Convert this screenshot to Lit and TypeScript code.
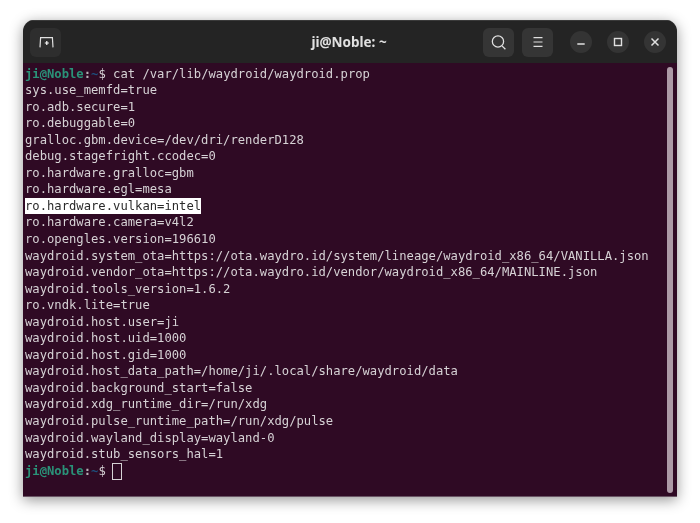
import { LitElement, html, css, svg } from "lit";
import { customElement } from "lit/decorators.js";

const LINES = [
  "sys.use_memfd=true",
  "ro.adb.secure=1",
  "ro.debuggable=0",
  "gralloc.gbm.device=/dev/dri/renderD128",
  "debug.stagefright.ccodec=0",
  "ro.hardware.gralloc=gbm",
  "ro.hardware.egl=mesa",
  "@ro.hardware.vulkan=intel",
  "ro.hardware.camera=v4l2",
  "ro.opengles.version=196610",
  "waydroid.system_ota=https://ota.waydro.id/system/lineage/waydroid_x86_64/VANILLA.json",
  "waydroid.vendor_ota=https://ota.waydro.id/vendor/waydroid_x86_64/MAINLINE.json",
  "waydroid.tools_version=1.6.2",
  "ro.vndk.lite=true",
  "waydroid.host.user=ji",
  "waydroid.host.uid=1000",
  "waydroid.host.gid=1000",
  "waydroid.host_data_path=/home/ji/.local/share/waydroid/data",
  "waydroid.background_start=false",
  "waydroid.xdg_runtime_dir=/run/xdg",
  "waydroid.pulse_runtime_path=/run/xdg/pulse",
  "waydroid.wayland_display=wayland-0",
  "waydroid.stub_sensors_hal=1",
];

const icon = (content: unknown, size = 16) => html`<svg
  width=${size}
  height=${size}
  viewBox="0 0 16 16"
  fill="none"
  stroke="#e0e0e0"
  stroke-width="1.2"
>${content}</svg>`;

@customElement("app-root")
export class AppRoot extends LitElement {
  static styles = css`
    :host {
      display: block;
      width: 700px;
      height: 523px;
      background: #fff;
      box-sizing: border-box;
      padding: 20px 23px 26px;
      overflow: hidden;
    }
    .window {
      height: 100%;
      display: flex;
      flex-direction: column;
      border-radius: 11px 11px 0 0;
      overflow: hidden;
      box-shadow: 0 3px 14px rgba(0, 0, 0, 0.42);
    }
    .header {
      flex: 0 0 43px;
      box-sizing: border-box;
      display: grid;
      grid-template-columns: 1fr auto 1fr;
      align-items: center;
      padding: 0 9px 0 7px;
      background: #242424;
      border-top: 1px solid #3a3a3a;
      color: #eee;
    }
    .left {
      display: flex;
    }
    .right {
      display: flex;
      justify-content: flex-end;
      margin-right: 2px;
    }
    .btn {
      width: 31px;
      height: 29px;
      border-radius: 6px;
      background: #353535;
      display: flex;
      align-items: center;
      justify-content: center;
    }
    .btn.dim {
      background: #2e2e2e;
    }
    .title {
      text-align: center;
      font: 700 13.5px "Noto Sans", sans-serif;
      color: #e0e0e0;
      filter: blur(0.3px);
    }
    .tools {
      display: flex;
      gap: 8px;
      margin-right: 17px;
    }
    .wm {
      display: flex;
      gap: 15px;
      align-items: center;
    }
    .circle {
      width: 22px;
      height: 22px;
      border-radius: 50%;
      background: #343434;
      display: flex;
      align-items: center;
      justify-content: center;
    }
    .body {
      flex: 1;
      min-height: 0;
      display: flex;
      background: #2f0a24;
      box-shadow: inset 0 -1px 0 #6a5565;
    }
    .term {
      flex: 1;
      min-width: 0;
      padding: 2.5px 0 0 2px;
      font: 12.2px/16.55px "DejaVu Sans Mono", monospace;
      color: #d6d2d5;
      filter: blur(0.3px);
    }
    .line {
      height: 16.55px;
      white-space: pre;
    }
    .user {
      color: #2a9278;
      font-weight: 700;
    }
    .path {
      color: #1d4f7d;
      font-weight: 700;
    }
    .colon {
      color: #b9b3b8;
      font-weight: 700;
    }
    .hl {
      background: #fff;
      color: #2a2a2a;
      display: inline-block;
      height: 16.55px;
    }
    .cursor {
      display: inline-block;
      box-sizing: border-box;
      width: 9.5px;
      height: 17px;
      margin-left: -1px;
      border: 1px solid #d6d2d5;
      vertical-align: top;
    }
    .track {
      flex: 0 0 15px;
      box-sizing: border-box;
      padding: 4px 4px 4px 5px;
      display: flex;
    }
    .thumb {
      flex: 1;
      border-radius: 3px;
      background: #ac9aa6;
    }
  `;

  private prompt() {
    return html`<span class="user">ji@Noble</span><span class="colon">:</span><span class="path">~</span>$ `;
  }

  render() {
    return html`<div class="window">
      <div class="header">
        <div class="left">
          <div class="btn dim">
            ${icon(svg`<path d="M2 13.4 L2.6 3.6 H14.4 L15 13.4"/><path d="M8.8 7v4M6.8 9h4" stroke="#fff"/>`)}
          </div>
        </div>
        <div class="title">ji@Noble: ~</div>
        <div class="right">
          <div class="tools">
            <div class="btn">
              ${icon(svg`<circle cx="7.5" cy="7" r="5.3"/><path d="M11.3 11.2l3.2 3.2"/>`, 17)}
            </div>
            <div class="btn">
              ${icon(svg`<path d="M3.5 3.7h9M3.5 8h9M3.5 12.3h9"/>`)}
            </div>
          </div>
          <div class="wm">
            <div class="circle">${icon(svg`<path d="M4.3 10h7.4" stroke-width="1.3"/>`)}</div>
            <div class="circle">${icon(svg`<rect x="4.5" y="4.5" width="7" height="7" stroke-width="1.4"/>`)}</div>
            <div class="circle">${icon(svg`<path d="M4.5 4.5l7 7M11.5 4.5l-7 7" stroke-width="1.5"/>`)}</div>
          </div>
        </div>
      </div>
      <div class="body">
        <div class="term">
          <div class="line">${this.prompt()}cat /var/lib/waydroid/waydroid.prop</div>
          ${LINES.map((l) =>
            l.startsWith("@")
              ? html`<div class="line"><span class="hl">${l.slice(1)}</span></div>`
              : html`<div class="line">${l}</div>`
          )}
          <div class="line">${this.prompt()}<span class="cursor"></span></div>
        </div>
        <div class="track"><div class="thumb"></div></div>
      </div>
    </div>`;
  }
}
